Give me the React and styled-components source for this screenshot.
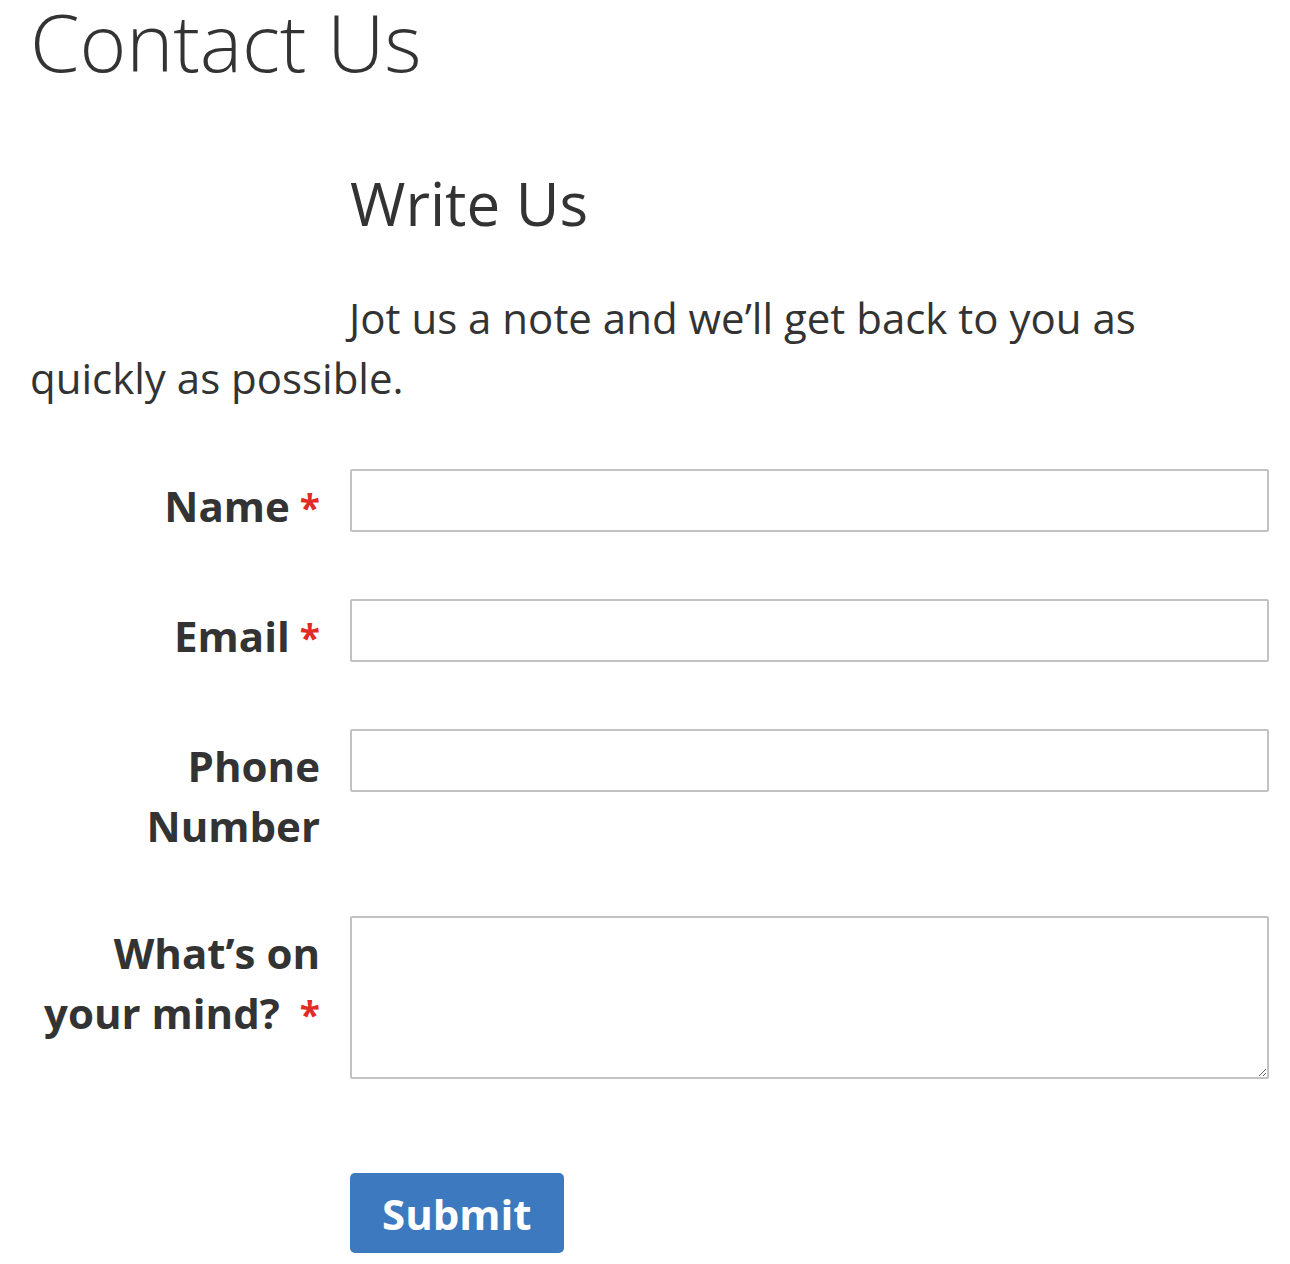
import React from "react";
import styled, { createGlobalStyle } from "styled-components";

const Global = createGlobalStyle`
  html, body { margin: 0; padding: 0; background: #fff; }
  body { font-family: "Open Sans", "Noto Sans", sans-serif; color: #333; }
  * { box-sizing: border-box; }
`;

const Page = styled.div`
  padding: 0 21px 0 30px;
`;

const Title = styled.h1`
  margin: 0;
  font-weight: 300;
  font-size: 80px;
  line-height: 82px;
  letter-spacing: -0.2px;
`;

const Fieldset = styled.fieldset`
  border: 0;
  margin: 0;
  padding: 0;
  min-width: 0;
`;

const Legend = styled.legend`
  padding: 0 0 0 320px;
  margin: 86px 0 0;
  font-size: 60px;
  font-weight: 400;
  line-height: 70px;
  float: left;
  width: 100%;
`;

const Note = styled.p`
  clear: both;
  margin: 0;
  padding-top: 50px;
  font-size: 42px;
  line-height: 60px;
`;

const Indent = styled.span`
  display: inline-block;
  width: 319px;
`;

const Form = styled.div`
  display: flex;
  flex-direction: column;
  gap: 63px;
  margin-top: 61px;
`;

const Row = styled.div`
  display: grid;
  grid-template-columns: 290px 1fr;
  column-gap: 30px;
  align-items: start;
  margin-top: ${(p) => p.$shift || 0}px;
`;

const Label = styled.label`
  text-align: right;
  font-weight: 700;
  font-size: 42px;
  line-height: 60px;
  padding-top: 7px;
`;

const Star = styled.span`
  color: #e02b27;
  font-size: 37px;
  line-height: 1;
  margin-left: ${(p) => p.$gap || 10}px;
`;

const Input = styled.input`
  display: block;
  width: 100%;
  height: 63px;
  border: 2px solid #c2c2c2;
  border-radius: 2px;
  background: #fff;
  font: inherit;
`;

const Textarea = styled.textarea`
  display: block;
  width: 100%;
  height: 163px;
  border: 2px solid #c2c2c2;
  border-radius: 2px;
  background: #fff;
  font: inherit;
  resize: vertical;
`;

const Actions = styled.div`
  padding-left: 320px;
  margin-top: 94px;
`;

const Button = styled.button`
  background: #3d79bf;
  color: #fff;
  border: 0;
  border-radius: 5px;
  font-family: "Open Sans", sans-serif;
  font-weight: 700;
  font-size: 42px;
  height: 80px;
  padding: 0 32px;
  cursor: pointer;
`;

export default function App() {
  return (
    <Page>
      <Global />
      <Title>Contact Us</Title>
      <Fieldset>
        <Legend>Write Us</Legend>
        <Note>
          <Indent />
          Jot us a note and we’ll get back to you as quickly as possible.
        </Note>
        <Form>
          <Row>
            <Label>
              Name<Star>*</Star>
            </Label>
            <Input type="text" />
          </Row>
          <Row>
            <Label>
              Email<Star>*</Star>
            </Label>
            <Input type="email" />
          </Row>
          <Row>
            <Label>Phone Number</Label>
            <Input type="tel" />
          </Row>
          <Row $shift={-3}>
            <Label>
              What’s on your mind?<Star $gap={20}>*</Star>
            </Label>
            <Textarea />
          </Row>
        </Form>
        <Actions>
          <Button type="button">Submit</Button>
        </Actions>
      </Fieldset>
    </Page>
  );
}
